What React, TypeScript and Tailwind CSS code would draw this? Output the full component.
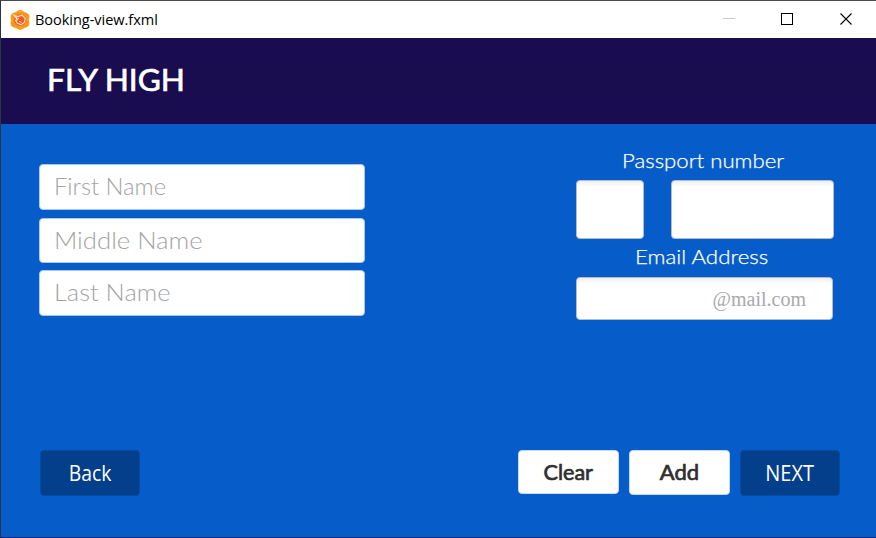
import React from "react";

function AppIcon() {
  return (
    <svg width="20" height="20" viewBox="0 0 20 20" className="shrink-0">
      <g fill="#f7a31c">
        <circle cx="10" cy="4.7" r="4.7" />
        <circle cx="14.6" cy="7.3" r="4.9" />
        <circle cx="14.6" cy="12.7" r="4.9" />
        <circle cx="10" cy="15.3" r="4.7" />
        <circle cx="5.4" cy="12.7" r="4.9" />
        <circle cx="5.4" cy="7.3" r="4.9" />
      </g>
      <path d="M1 5 6 1.5 10 4 14 1.5 19 5 17 10 19 15 14 18.5 10 16 6 18.5 1 15 3 10Z" fill="#f98b16" opacity="0.6" />
      <circle cx="10" cy="10" r="5.8" fill="#f4581d" />
      <path d="M4 5.2 8 6.6 12 5.2 15.2 8.5 14.4 12.5 11 14.6 7.3 13.3 5.6 10.2 7.4 9.6Z" fill="none" stroke="#ffe3cf" strokeWidth="1.1" />
      <path d="M5 5.5 7.6 9.3 9 8.2M9 11.5 11.5 12" fill="none" stroke="#ffe3cf" strokeWidth="1" />
    </svg>
  );
}

function TitleBar() {
  return (
    <div className="flex h-[37px] shrink-0 items-center bg-white pl-[9px]">
      <AppIcon />
      <span className="ml-[5px] inline-block origin-left scale-x-[0.97] whitespace-nowrap pb-[2px] font-['Open_Sans',sans-serif] text-[15px] leading-5 tracking-[-0.05px] text-black">
        Booking-view.fxml
      </span>
      <svg width="130" height="14" viewBox="0 0 130 14" className="ml-auto mr-[23px]" fill="none" shapeRendering="crispEdges">
        <path d="M0 5.5H12" stroke="#c9c9c9" />
        <path d="M58.5 0.5H69.5V11.5H58.5Z" stroke="#000" />
        <path d="M117.5 0.5 128.5 11.5M128.5 0.5 117.5 11.5" stroke="#000" strokeWidth="1.1" shapeRendering="auto" />
      </svg>
    </div>
  );
}

function NameField({ label, className, textClass }: { label: string; className: string; textClass: string }) {
  return (
    <div className={"flex w-[326px] items-center rounded-[4px] border border-[#a9c8ee] bg-white pb-[2px] pl-[14px] font-['Lato',sans-serif] text-[24px] font-light leading-none text-[#a3a3a3] " + className}>
      <span className={"inline-block origin-left whitespace-nowrap " + textClass}>{label}</span>
    </div>
  );
}

const insetBox =
  "rounded-[4px] border border-[#b5bcc6] bg-white bg-gradient-to-b from-[#efefef] to-white to-[6px]";

export default function App() {
  return (
    <div className="flex h-[538px] w-[876px] flex-col overflow-hidden border-b border-l border-t border-b-[#10246b] border-l-[#2b3445] border-t-[#4a4a4a] bg-[#065dc9]">
      <TitleBar />
      <header className="flex h-[86px] shrink-0 items-center bg-[#190d50] pb-[3px] pl-[46px]">
        <h1 className="origin-left scale-x-[1.02] whitespace-nowrap font-['Lato',sans-serif] text-[31px] font-normal leading-none text-white [-webkit-text-stroke:0.7px_white]">FLY HIGH</h1>
      </header>
      <main className="flex grow flex-col">
        <div className="flex h-[326px] justify-between pl-[38px] pr-[42px]">
          <section className="flex flex-col pt-[40px]">
            <NameField label="First Name" className="h-[46px]" textClass="scale-x-[0.99]" />
            <NameField label="Middle Name" className="mt-[8px] h-[45px]" textClass="scale-x-[1.07]" />
            <NameField label="Last Name" className="mt-[7px] h-[46px]" textClass="scale-x-[1.06]" />
          </section>
          <section className="flex w-[258px] flex-col pt-[21px] font-['Lato',sans-serif] text-[20px] leading-[30px] text-white">
            <div className="pl-[46px]">
              <span className="inline-block origin-left scale-x-[1.11] whitespace-nowrap font-light [-webkit-text-stroke:0.25px_white]">Passport number</span>
            </div>
            <div className="mt-[5px] flex justify-between">
              <div className={"h-[59px] w-[68px] " + insetBox} />
              <div className={"h-[59px] w-[163px] " + insetBox} />
            </div>
            <div className="mt-[2px] pl-[59px]">
              <span className="inline-block origin-left scale-x-[1.115] whitespace-nowrap font-light [-webkit-text-stroke:0.25px_white]">Email Address</span>
            </div>
            <div className={"mt-[6px] flex h-[43px] w-[257px] items-center justify-end pr-[26px] text-[#a9a9a9] " + insetBox}>
              <span className="whitespace-nowrap font-['Liberation_Serif',serif] text-[20px] leading-none">@mail.com</span>
            </div>
          </section>
        </div>
        <div className="flex items-start pl-[39px] text-[21px] leading-none">
          <button className="h-[46px] w-[100px] rounded-[4px] border border-[#064b9d] bg-[#033f8a] font-['Open_Sans',sans-serif] text-white">
            <span className="inline-block scale-x-[0.92]">Back</span>
          </button>
          <button className="ml-[378px] h-[44px] w-[101px] rounded-[4px] border border-[#c3d8f3] bg-white font-['Lato',sans-serif] text-[22px] text-[#2f2f2f]">
            <span className="inline-block scale-x-[0.98] [-webkit-text-stroke:0.7px_#2f2f2f]">Clear</span>
          </button>
          <button className="ml-[10px] h-[45px] w-[101px] rounded-[4px] border border-[#c3d8f3] bg-white pb-[2px] font-['Lato',sans-serif] text-[22px] text-[#2f2f2f]">
            <span className="inline-block [-webkit-text-stroke:0.7px_#2f2f2f]">Add</span>
          </button>
          <button className="ml-[10px] h-[46px] w-[100px] rounded-[4px] border border-[#064b9d] bg-[#033f8a] font-['Open_Sans',sans-serif] text-white">
            <span className="inline-block scale-x-[0.95]">NEXT</span>
          </button>
        </div>
      </main>
    </div>
  );
}
